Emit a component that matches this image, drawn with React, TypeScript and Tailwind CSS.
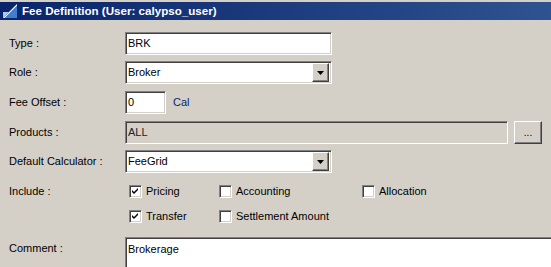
import React from "react";

const sunken =
  "border border-t-[#808080] border-l-[#808080] border-b-white border-r-white shadow-[inset_1px_1px_0_#404040,inset_-1px_-1px_0_#d4d0c8]";
const raised =
  "border border-t-white border-l-white border-b-[#404040] border-r-[#404040] shadow-[inset_-1px_-1px_0_#808080,inset_1px_1px_0_#d4d0c8] bg-[#d4d0c8]";

function Label({ children }: { children: React.ReactNode }) {
  return <div className="w-[116px] shrink-0 text-[11px] text-black">{children}</div>;
}

function Combo({ value }: { value: string }) {
  return (
    <div className={`${sunken} bg-white w-[207px] h-[23px] flex items-center pl-[2px] pr-[2px]`}>
      <span className="flex-1 text-[11px] text-black">{value}</span>
      <div className={`${raised} w-[17px] h-[19px] flex items-center justify-center`}>
        <svg width="7" height="4" viewBox="0 0 7 4">
          <path d="M0 0 H7 L3.5 4 Z" fill="#000" />
        </svg>
      </div>
    </div>
  );
}

function Check({ checked, label }: { checked: boolean; label: string }) {
  return (
    <div className="flex items-center gap-[4px]">
      <div className={`${sunken} bg-white w-[13px] h-[13px] flex items-center justify-center`}>
        {checked && (
          <svg width="7" height="7" viewBox="0 0 7 7">
            <path d="M0 2 L2 4 L6 0 V2 L2 6 L0 4 Z" fill="#000" />
          </svg>
        )}
      </div>
      <span className="text-[11px] text-black">{label}</span>
    </div>
  );
}

export default function App() {
  return (
    <div
      className="w-[551px] h-[267px] bg-[#d4d0c8] overflow-hidden pt-[2px]"
      style={{ fontFamily: '"Liberation Sans", Arial, sans-serif' }}
    >
      <div className="h-[18px] flex items-center bg-gradient-to-r from-[#0a246a] to-[#2f5290] pl-[2px]">
        <svg width="16" height="16" viewBox="0 0 16 16" className="shrink-0">
          <path d="M1 15 L15 1 L15 3 L3 15 Z" fill="#ffffff" />
          <path d="M3 15 L15 3 L15 15 Z" fill="#3f7fd0" />
          <path d="M1 15 L1 9 L7 9 Z" fill="#a8c8f0" />
        </svg>
        <span className="ml-[4px] text-white font-bold text-[11.6px] leading-none">
          Fee Definition (User: calypso_user)
        </span>
      </div>

      <div className="pl-[9px]">
        <div className="mt-[12px] flex items-center h-[23px]">
          <Label>Type :</Label>
          <div className={`${sunken} bg-white w-[207px] h-[23px] flex items-center pl-[2px] text-[11px] text-black`}>
            BRK
          </div>
        </div>

        <div className="mt-[6px] flex items-center h-[23px]">
          <Label>Role :</Label>
          <Combo value="Broker" />
        </div>

        <div className="mt-[7px] flex items-center h-[23px]">
          <Label>Fee Offset :</Label>
          <div className={`${sunken} bg-white w-[41px] h-[23px] flex items-center pl-[2px] text-[11px] text-black`}>
            0
          </div>
          <span className="ml-[7px] text-[11px] text-[#0a246a]">Cal</span>
        </div>

        <div className="mt-[7px] flex items-center h-[23px]">
          <Label>Products :</Label>
          <div className={`${sunken} bg-[#d4d0c8] w-[383px] h-[23px] flex items-center pl-[2px] text-[11px] text-[#222]`}>
            ALL
          </div>
          <div className={`${raised} ml-[6px] w-[28px] h-[23px] flex items-center justify-center text-[10px] text-black leading-none`}>
            ...
          </div>
        </div>

        <div className="mt-[6px] flex items-center h-[23px]">
          <Label>Default Calculator :</Label>
          <Combo value="FeeGrid" />
        </div>

        <div className="mt-[6px] flex">
          <div className="w-[116px] shrink-0 h-[25px] flex items-center text-[11px] text-black">Include :</div>
          <div className="grid grid-cols-[90px_143px_120px] pl-[4px]">
            <div className="h-[25px] flex items-center"><Check checked label="Pricing" /></div>
            <div className="h-[25px] flex items-center"><Check checked={false} label="Accounting" /></div>
            <div className="h-[25px] flex items-center"><Check checked={false} label="Allocation" /></div>
            <div className="h-[25px] flex items-center"><Check checked label="Transfer" /></div>
            <div className="h-[25px] flex items-center"><Check checked={false} label="Settlement Amount" /></div>
          </div>
        </div>

        <div className="mt-[8px] flex items-start">
          <div className="w-[116px] shrink-0 pt-[3px] text-[11px] text-black">Comment :</div>
          <div className={`${sunken} bg-white w-[440px] h-[60px] pl-[2px] pt-[3px] text-[11px] text-black shrink-0`}>
            Brokerage
          </div>
        </div>
      </div>
    </div>
  );
}
